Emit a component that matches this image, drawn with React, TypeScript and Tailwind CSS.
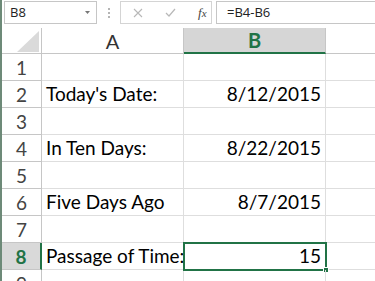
import React from "react";

const rows: { n: number; a: string; b: string }[] = [
  { n: 1, a: "", b: "" },
  { n: 2, a: "Today's Date:", b: "8/12/2015" },
  { n: 3, a: "", b: "" },
  { n: 4, a: "In Ten Days:", b: "8/22/2015" },
  { n: 5, a: "", b: "" },
  { n: 6, a: "Five Days Ago", b: "8/7/2015" },
  { n: 7, a: "", b: "" },
  { n: 8, a: "Passage of Time:", b: "15" },
  { n: 9, a: "", b: "" },
];

const font = { fontFamily: "Lato, 'Open Sans', sans-serif" };

export default function App() {
  return (
    <div className="w-[375px] h-[281px] overflow-hidden bg-white flex" style={font}>
      <div className="w-[2px] shrink-0 bg-[#6d8a78]" />
      <div className="flex-1 flex flex-col min-w-0">
        {/* toolbar */}
        <div className="h-[28px] shrink-0 flex items-start pt-[1px] bg-white">
          <div className="ml-[2px] w-[93px] h-[23px] border border-[#c6c6c6] flex items-center justify-between pl-[5px] pr-[6px]">
            <span className="text-[13px] text-[#222] leading-none" style={{ fontFamily: "'Open Sans', sans-serif" }}>B8</span>
            <svg width="5" height="3" viewBox="0 0 5 3"><path d="M0 0h5L2.5 3z" fill="#777" /></svg>
          </div>
          <div className="w-[23px] h-[23px] flex items-center justify-center">
            <svg width="2" height="10" viewBox="0 0 2 10">
              <rect x="0" y="0" width="2" height="2" fill="#b5b5b5" />
              <rect x="0" y="4" width="2" height="2" fill="#b5b5b5" />
              <rect x="0" y="8" width="2" height="2" fill="#b5b5b5" />
            </svg>
          </div>
          <div className="w-[92px] h-[23px] border border-[#d4d4d4] flex items-center">
            <svg className="ml-[12px]" width="10" height="10" viewBox="0 0 10 10">
              <path d="M1 1L9 9M9 1L1 9" stroke="#b8b8b8" strokeWidth="1.1" />
            </svg>
            <svg className="ml-[22px]" width="11" height="9" viewBox="0 0 11 9">
              <path d="M1 5L4 8L10 1" stroke="#b8b8b8" strokeWidth="1.2" fill="none" />
            </svg>
            <span
              className="ml-[22px] text-[13px] italic text-[#444] leading-none"
              style={{ fontFamily: "'Liberation Serif', serif" }}
            >
              f<span className="text-[11px]">x</span>
            </span>
          </div>
          <div className="ml-[4px] flex-1 h-[23px] border border-r-0 border-[#c6c6c6] flex items-center pl-[10px]">
            <span className="text-[13px] text-[#222] leading-none" style={{ fontFamily: "'Open Sans', sans-serif" }}>=B4-B6</span>
          </div>
        </div>
        {/* header row */}
        <div className="h-[26px] shrink-0 grid grid-cols-[40px_142px_142px_1fr]">
          <div className="relative border-r border-b border-[#c6c6c6] bg-white">
            <div
              className="absolute right-[2px] bottom-[1px] w-[22px] h-[21px] bg-[#dadada]"
              style={{ clipPath: "polygon(100% 0, 100% 100%, 0 100%)" }}
            />
          </div>
          <div className="border-r border-b border-[#c6c6c6] bg-white flex items-center justify-center text-[20px] text-[#333] leading-none">
            A
          </div>
          <div className="border-r border-[#c6c6c6] border-b-2 border-b-[#217346] bg-[#d6d6d6] flex items-center justify-center text-[20px] font-bold text-[#217346] leading-none">
            B
          </div>
          <div className="border-b border-[#c6c6c6] bg-white" />
        </div>
        {/* rows */}
        {rows.map((r) => {
          const sel = r.n === 8;
          return (
            <div key={r.n} className="h-[27px] shrink-0 grid grid-cols-[40px_142px_142px_1fr]">
              <div
                className={
                  sel
                    ? "border-r-2 border-r-[#217346] border-b border-b-[#c6c6c6] bg-[#d9d9d9] flex items-end justify-center pb-[3px] text-[19px] font-bold text-[#217346] leading-none"
                    : "border-r border-b border-[#c6c6c6] bg-white flex items-end justify-center pb-[3px] text-[19px] text-[#444] leading-none"
                }
              >
                {r.n}
              </div>
              <div className="border-r border-b border-[#dedede] flex items-end pl-[4px] pb-[4px] text-[19px] text-black leading-none whitespace-nowrap overflow-visible">
                {r.a}
              </div>
              <div className="relative border-r border-b border-[#dedede] flex items-end justify-end pr-[4px] pb-[4px] text-[19px] text-black leading-none">
                {r.b}
                {sel && (
                  <>
                    <div className="absolute left-[-1px] top-[-1px] right-[-2px] bottom-[-2px] border-2 border-[#217346] pointer-events-none" />
                    <div className="absolute right-[-4px] bottom-[-4px] w-[6px] h-[6px] bg-[#217346] border border-white" />
                  </>
                )}
              </div>
              <div className="border-b border-[#dedede]" />
            </div>
          );
        })}
      </div>
    </div>
  );
}
